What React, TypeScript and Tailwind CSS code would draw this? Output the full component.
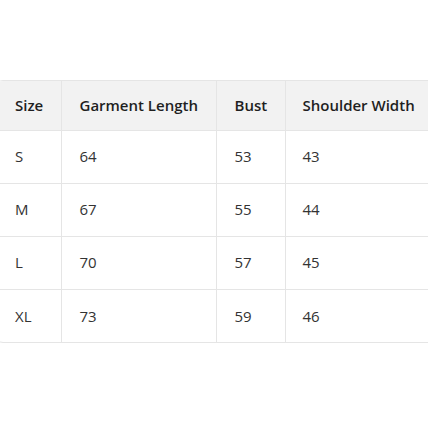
import React from "react";

const rows = [
  ["S", "64", "53", "43"],
  ["M", "67", "55", "44"],
  ["L", "70", "57", "45"],
  ["XL", "73", "59", "46"],
];

const App = () => {
  return (
    <div className="w-[428px] h-[428px] bg-white overflow-hidden pt-[80px] font-['Open_Sans',sans-serif]">
      <div className="ml-[-5px] w-[460px] border border-[#e5e5e5] rounded-lg overflow-hidden">
        <table className="w-full border-collapse text-[15px] text-left">
          <thead>
            <tr className="bg-[#f2f2f2] h-[49px] text-[#1f1f1f]">
              <th className="w-[65px] pl-[19px] font-semibold">Size</th>
              <th className="w-[155px] pl-[18px] font-semibold border-l border-[#e5e5e5]">Garment Length</th>
              <th className="w-[69px] pl-[18px] font-semibold border-l border-[#e5e5e5]">Bust</th>
              <th className="pl-[17px] font-semibold border-l border-[#e5e5e5]">Shoulder Width</th>
            </tr>
          </thead>
          <tbody className="text-[#333333]">
            {rows.map((r) => (
              <tr key={r[0]} className="h-[53px] border-t border-[#e5e5e5]">
                <td className="pl-[19px]">{r[0]}</td>
                <td className="pl-[18px] border-l border-[#e5e5e5]">{r[1]}</td>
                <td className="pl-[18px] border-l border-[#e5e5e5]">{r[2]}</td>
                <td className="pl-[17px] border-l border-[#e5e5e5]">{r[3]}</td>
              </tr>
            ))}
          </tbody>
        </table>
      </div>
    </div>
  );
};

export default App;
